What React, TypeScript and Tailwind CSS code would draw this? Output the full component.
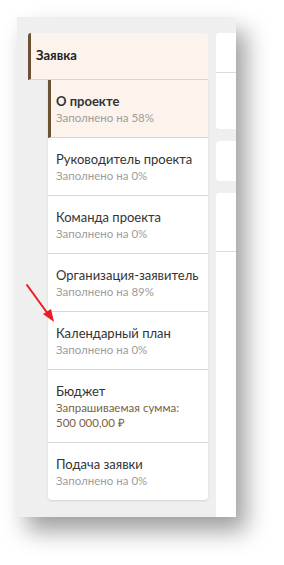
import React from 'react'

type Step = {
  title: string
  sub: string[]
  active?: boolean
  brown?: boolean
}

const steps: Step[] = [
  { title: 'О проекте', sub: ['Заполнено на 58%'], active: true },
  { title: 'Руководитель проекта', sub: ['Заполнено на 0%'] },
  { title: 'Команда проекта', sub: ['Заполнено на 0%'] },
  { title: 'Организация-заявитель', sub: ['Заполнено на 89%'] },
  { title: 'Календарный план', sub: ['Заполнено на 0%'] },
  { title: 'Бюджет', sub: ['Запрашиваемая сумма:', '500 000,00 ₽'], brown: true },
  { title: 'Подача заявки', sub: ['Заполнено на 0%'] },
]

function StepItem({ step, last }: { step: Step; last: boolean }) {
  return (
    <div
      className={
        'pt-3 pb-3 pr-1 ' +
        (step.active ? 'bg-[#fbf3ec] border-l-[3px] border-[#6b5234] pl-[5px] ' : 'bg-white pl-2 ') +
        (last ? '' : 'border-b border-b-[#ddd6cf]')
      }
    >
      <div className={'text-[13px] leading-[18px] whitespace-nowrap text-[#333] ' + (step.active ? 'font-bold text-[#222]' : '')}>
        {step.title}
      </div>
      {step.sub.map((s) => (
        <div
          key={s}
          className={'text-[11.5px] leading-[15px] whitespace-nowrap ' + (step.brown ? 'text-[#7a6244]' : 'text-[#9d9d9d]')}
        >
          {s}
        </div>
      ))}
    </div>
  )
}

export default function App() {
  return (
    <div className="relative w-[284px] h-[565px] bg-white font-['Lato',sans-serif] overflow-hidden">
      <div className="ml-[17px] mt-[17px] w-[219px] h-[500px] bg-[#efefef] overflow-hidden shadow-[10px_14px_22px_rgba(0,0,0,0.38)]">
        <div className="flex flex-row gap-2 pt-4 pl-[11px]">
          <div className="w-[180px] shrink-0 flex flex-col">
            <div className="h-[47px] flex items-center bg-[#fbf3ec] border-l-[3px] border-[#6b5234] rounded-tl-[3px] rounded-tr-[4px] border-b border-b-[#ddd6cf] pl-[5px]">
              <span className="text-[13px] font-bold text-[#222]">Заявка</span>
            </div>
            <div className="ml-5 bg-white rounded-b-[4px] overflow-hidden shadow-[0_1px_2px_rgba(0,0,0,0.12)]">
              {steps.map((s, i) => (
                <StepItem key={s.title} step={s} last={i === steps.length - 1} />
              ))}
            </div>
          </div>
          <div className="w-[30px] shrink-0 flex flex-col gap-3">
            <div className="h-[96px] bg-white rounded-[4px] flex flex-col">
              <div className="h-[40px] border-b border-b-[#dcdcdc]"></div>
            </div>
            <div className="h-[40px] bg-white rounded-[4px]"></div>
            <div className="h-[330px] bg-white rounded-t-[4px] flex flex-col">
              <div className="h-[59px] border-b border-b-[#dcdcdc]"></div>
            </div>
          </div>
        </div>
      </div>
      <svg className="absolute left-0 top-0" width="284" height="565" viewBox="0 0 284 565">
        <line x1="27" y1="285" x2="48" y2="314" stroke="#ec1c24" strokeWidth="2" strokeLinecap="round" />
        <polygon points="54,322 43,314 51,309" fill="#ec1c24" />
      </svg>
    </div>
  )
}
